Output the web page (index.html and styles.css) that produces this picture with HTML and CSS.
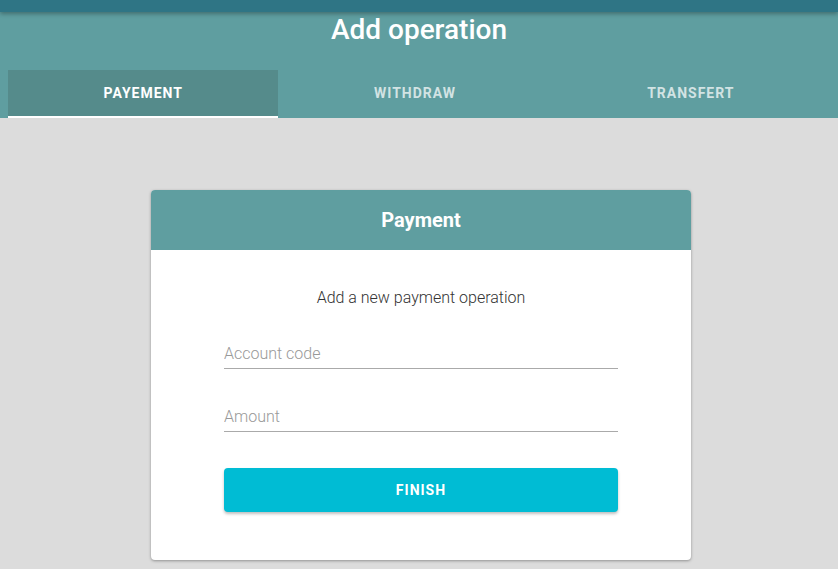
FILE: index.html
```html
<!DOCTYPE html>
<html>
<head>
<meta charset="utf-8">
<link rel="stylesheet" href="styles.css">
</head>
<body>
<div class="topbar"></div>
<header class="header">
  <h1 class="title">Add operation</h1>
  <nav class="tabs">
    <div class="tab active">PAYEMENT</div>
    <div class="tab">WITHDRAW</div>
    <div class="tab">TRANSFERT</div>
  </nav>
</header>
<main class="content">
  <section class="card">
    <div class="card-head">Payment</div>
    <div class="card-body">
      <p class="intro">Add a new payment operation</p>
      <div class="field"><input class="input" type="text" placeholder="Account code"></div>
      <div class="field"><input class="input" type="text" placeholder="Amount"></div>
      <button class="btn">FINISH</button>
    </div>
  </section>
</main>
</body>
</html>
```
FILE: styles.css
```css
html, body {
  margin: 0;
  padding: 0;
}
body {
  background: #dcdcdc;
  font-family: Roboto, "Liberation Sans", sans-serif;
  height: 569px;
  overflow: hidden;
}
.topbar {
  height: 12px;
  background: #2f7585;
  box-shadow: 0 2px 4px rgba(0,0,0,0.3);
  position: relative;
  z-index: 2;
}
.header {
  background: #5f9ea0;
  padding: 0 8px;
}
.title {
  margin: 0;
  height: 58px;
  box-sizing: border-box;
  padding-top: 1px;
  text-align: center;
  color: #fff;
  font-size: 28px;
  font-weight: 500;
  line-height: 34px;
}
.tabs {
  display: flex;
  height: 48px;
}
.tab {
  flex: 1 1 auto;
  display: flex;
  align-items: center;
  justify-content: center;
  font-size: 14px;
  font-weight: 700;
  letter-spacing: 1px;
  color: rgba(255,255,255,0.72);
  box-sizing: border-box;
  padding-bottom: 2px;
}
.tab.active {
  background: #558b8b;
  color: #fff;
  border-bottom: 2px solid #fff;
  padding-bottom: 0;
}
.content {
  display: flex;
  justify-content: center;
  padding-top: 72px;
  padding-left: 4px;
}
.card {
  width: 540px;
  background: #fff;
  border-radius: 4px;
  box-shadow: 0 1px 3px rgba(0,0,0,0.35);
  overflow: hidden;
}
.card-head {
  background: #5f9ea0;
  height: 60px;
  display: flex;
  align-items: center;
  justify-content: center;
  color: #fff;
  font-size: 20px;
  font-weight: 700;
}
.card-body {
  padding: 39px 73px 48px;
  display: flex;
  flex-direction: column;
}
.intro {
  margin: 0 0 32px;
  text-align: center;
  font-size: 16px;
  font-weight: 300;
  color: #333;
  line-height: 18px;
}
.field {
  margin-bottom: 33px;
}
.input {
  display: block;
  width: 100%;
  box-sizing: border-box;
  border: none;
  border-bottom: 1px solid #aaa;
  padding: 4px 0 5px;
  font-family: Roboto, "Liberation Sans", sans-serif;
  font-size: 16px;
  font-weight: 300;
  line-height: 20px;
  height: 30px;
  outline: none;
  background: transparent;
  color: #333;
}
.input::placeholder {
  color: #999;
}
.btn {
  margin-top: 3px;
  height: 44px;
  border: none;
  border-radius: 4px;
  background: #00bcd4;
  color: #fff;
  font-family: Roboto, "Liberation Sans", sans-serif;
  font-size: 14px;
  font-weight: 700;
  letter-spacing: 1px;
  box-shadow: 0 2px 3px rgba(0,0,0,0.25);
}
```
